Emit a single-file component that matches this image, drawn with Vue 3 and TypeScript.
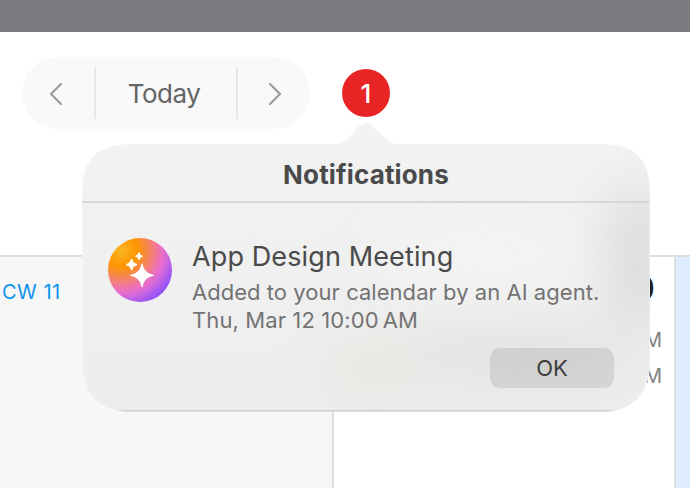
<template>
  <div class="window">
    <div class="titlebar"></div>
    <header class="toolbar">
      <div class="date-nav">
        <button class="nav-arrow" aria-label="Previous" @click="offset--">
          <svg width="14" height="24" viewBox="0 0 14 24">
            <path d="M12 2 2 12l10 10" />
          </svg>
        </button>
        <button class="today" @click="offset = 0">Today</button>
        <button class="nav-arrow next" aria-label="Next" @click="offset++">
          <svg width="14" height="24" viewBox="0 0 14 24">
            <path d="M2 2l10 10L2 22" />
          </svg>
        </button>
      </div>
      <button class="badge" @click="open = !open">{{ count }}</button>
    </header>

    <main class="calendar">
      <section class="week-cell">
        <span class="week">CW {{ 11 + offset }}</span>
      </section>
      <section class="day-cell">
        <span class="day">10</span>
        <span v-for="(time, i) in times" :key="i" class="time">{{ time }}</span>
      </section>
      <section class="selected-cell"></section>
    </main>

    <div v-if="open" class="popover">
      <svg class="popover-bg" width="568" height="290" viewBox="0 0 568 290">
        <defs>
          <clipPath id="bubble">
            <path :d="bubblePath" />
          </clipPath>
          <linearGradient id="glass" x1="0" y1="0" x2="0" y2="1">
            <stop offset="0" stop-color="#f3f3f3" />
            <stop offset="0.5" stop-color="#f0f0f0" />
            <stop offset="1" stop-color="#ededed" />
          </linearGradient>
          <filter id="soft" x="-100%" y="-100%" width="300%" height="300%" color-interpolation-filters="sRGB">
            <feGaussianBlur stdDeviation="24" />
          </filter>
        </defs>
        <g clip-path="url(#bubble)">
          <rect width="568" height="290" fill="url(#glass)" />
          <g filter="url(#soft)">
            <ellipse cx="400" cy="130" rx="110" ry="45" fill="#f3f3f3" />
            <ellipse cx="556" cy="135" rx="32" ry="75" fill="#dcdcdc" />
            <ellipse cx="430" cy="232" rx="130" ry="26" fill="#e2e2e1" />
            <ellipse cx="290" cy="245" rx="48" ry="25" fill="#e8e6e0" />
          </g>
          <rect y="79" width="568" height="2" fill="#d7d7d7" />
          <rect y="288" width="568" height="2" fill="#d0d0d0" />
          <path :d="bubblePath" class="rim" />
        </g>
      </svg>
      <h1>Notifications</h1>
      <article class="notification">
        <svg class="agent-icon" width="64" height="64" viewBox="0 0 64 64">
          <defs>
            <radialGradient id="agent" gradientUnits="userSpaceOnUse" cx="13" cy="12" r="60">
              <stop offset="0" stop-color="#f8b622" />
              <stop offset="0.28" stop-color="#ff9500" />
              <stop offset="0.5" stop-color="#f5826b" />
              <stop offset="0.7" stop-color="#e96dcb" />
              <stop offset="0.78" stop-color="#d468dc" />
              <stop offset="0.98" stop-color="#8f50fa" />
              <stop offset="1" stop-color="#874dff" />
            </radialGradient>
          </defs>
          <circle cx="32" cy="32" r="32" fill="url(#agent)" />
          <path v-for="star in stars" :key="star" :d="star" class="star" />
        </svg>
        <div class="details">
          <h2>App Design Meeting</h2>
          <p class="message">Added to your calendar by an AI agent.</p>
          <p class="when">Thu, Mar 12 10:00&#8201;AM</p>
        </div>
      </article>
      <div class="actions">
        <button class="ok" @click="open = false">OK</button>
      </div>
    </div>
  </div>
</template>

<script setup lang="ts">
import { ref } from 'vue'

const open = ref(true)
const offset = ref(0)
const count = ref(1)
const times = ['10 AM', '11 AM']

// bubble with smooth corners and the arrow at the top
const bubblePath =
  'M48 22 H252 C260 22 264 18 268 14 L275 6 C281 -1 287 -1 293 6 L301 14 C306 19 310 22 318 22 H520 ' +
  'C554 22 568 38 568 70 V238 C568 271 553 290 518 290 H50 C15 290 0 270 0 238 V70 C0 38 15 22 48 22 Z'

// four pointed star around a center
const sparkle = (x: number, y: number, r: number) => {
  const k = r * 0.15
  return `M${x} ${y - r} Q${x + k} ${y - k} ${x + r} ${y} Q${x + k} ${y + k} ${x} ${y + r} Q${x - k} ${y + k} ${x - r} ${y} Q${x - k} ${y - k} ${x} ${y - r} Z`
}

const stars = [sparkle(34, 37.3, 11.5), sparkle(23.6, 26.6, 5.6), sparkle(31, 18.2, 3.6)]
</script>

<style>
body {
  margin: 0;
  overflow: hidden;
}
</style>

<style scoped>
.window {
  position: relative;
  display: flex;
  flex-direction: column;
  width: 690px;
  height: 488px;
  overflow: hidden;
  background: #fff;
  font-family: Inter, "Liberation Sans", sans-serif;
}

button {
  padding: 0;
  border: 0;
  font-family: inherit;
  cursor: pointer;
}

.titlebar {
  flex: none;
  height: 32px;
  background: #7a7b7f;
}

.toolbar {
  flex: none;
  box-sizing: border-box;
  display: flex;
  align-items: flex-start;
  gap: 32px;
  height: 223px;
  padding: 25px 22px 0;
}

.date-nav {
  display: flex;
  align-items: center;
  width: 288px;
  height: 72px;
  border-radius: 36px;
  background: #f9f9f9;
}

.nav-arrow {
  display: flex;
  justify-content: flex-end;
  align-items: center;
  box-sizing: border-box;
  width: 72px;
  height: 72px;
  padding-right: 31px;
  background: none;
}

.nav-arrow.next {
  justify-content: flex-start;
  padding: 0 0 0 30px;
}

.nav-arrow svg {
  margin-top: 2px;
  fill: none;
  stroke: #9c9c9c;
  stroke-width: 2.2;
  stroke-linecap: round;
  stroke-linejoin: round;
}

.today {
  box-sizing: border-box;
  width: 144px;
  height: 52px;
  border-left: 2px solid #e8e8e8;
  border-right: 2px solid #e8e8e8;
  background: none;
  color: #656565;
  font-size: 26px;
  letter-spacing: -0.5px;
  padding-top: 1px;
  padding-right: 4px;
}

.badge {
  width: 48px;
  height: 48px;
  margin-top: 12px;
  border-radius: 50%;
  background: #e82424;
  color: #fff;
  font-size: 26px;
  font-weight: 500;
}

.calendar {
  flex: 1;
  display: grid;
  grid-template-columns: 334px 342px 14px;
  border-top: 2px solid #dedede;
}

.week-cell {
  padding: 22px 2px;
  border-right: 2px solid #dedede;
  background: #f7f7f7;
}

.week {
  color: #0d92f4;
  font-size: 20px;
  letter-spacing: 0.5px;
  line-height: 26px;
}

.day-cell {
  display: flex;
  flex-direction: column;
  align-items: flex-end;
  padding: 12px 12px 0 0;
  border-right: 2px solid #dedede;
}

.day {
  height: 53px;
  margin-right: 7px;
  color: #222;
  font-size: 32px;
  font-weight: 500;
  line-height: 40px;
}

.time {
  color: #808080;
  font-size: 20px;
  line-height: 36px;
}

.selected-cell {
  background: #deedff;
}

.popover {
  position: absolute;
  top: 122px;
  left: 82px;
  width: 568px;
  height: 290px;
}

.popover-bg {
  position: absolute;
  inset: 0;
}

.rim {
  fill: none;
  stroke: #fff;
  stroke-opacity: 0.25;
  stroke-width: 2;
}

.star {
  fill: #fff;
  stroke: #fff;
  stroke-width: 1;
  stroke-linejoin: round;
}

h1 {
  position: relative;
  margin: 0;
  padding-top: 22px;
  height: 59px;
  color: #4a4a4a;
  font-size: 26px;
  font-weight: 700;
  letter-spacing: 0.15px;
  line-height: 62px;
  text-align: center;
}

.notification {
  position: relative;
  display: flex;
  gap: 20px;
  padding: 35px 26px 0;
}

.agent-icon {
  flex: none;
}

.details {
  white-space: nowrap;
}

h2 {
  margin: 2px 0 4px;
  color: #4a4a4a;
  font-size: 27px;
  font-weight: 400;
  letter-spacing: 0.12px;
  line-height: 34px;
}

p {
  margin: 0;
  color: #737373;
  font-size: 22px;
  letter-spacing: 0.04px;
  line-height: 28px;
}

.when {
  letter-spacing: 0.1px;
}

.actions {
  position: relative;
  display: flex;
  justify-content: flex-end;
  padding: 14px 36px 0 0;
}

.ok {
  width: 124px;
  height: 40px;
  border-radius: 10px;
  background: rgba(0, 0, 0, 0.09);
  color: #3d3d3d;
  font-size: 22px;
}
</style>
